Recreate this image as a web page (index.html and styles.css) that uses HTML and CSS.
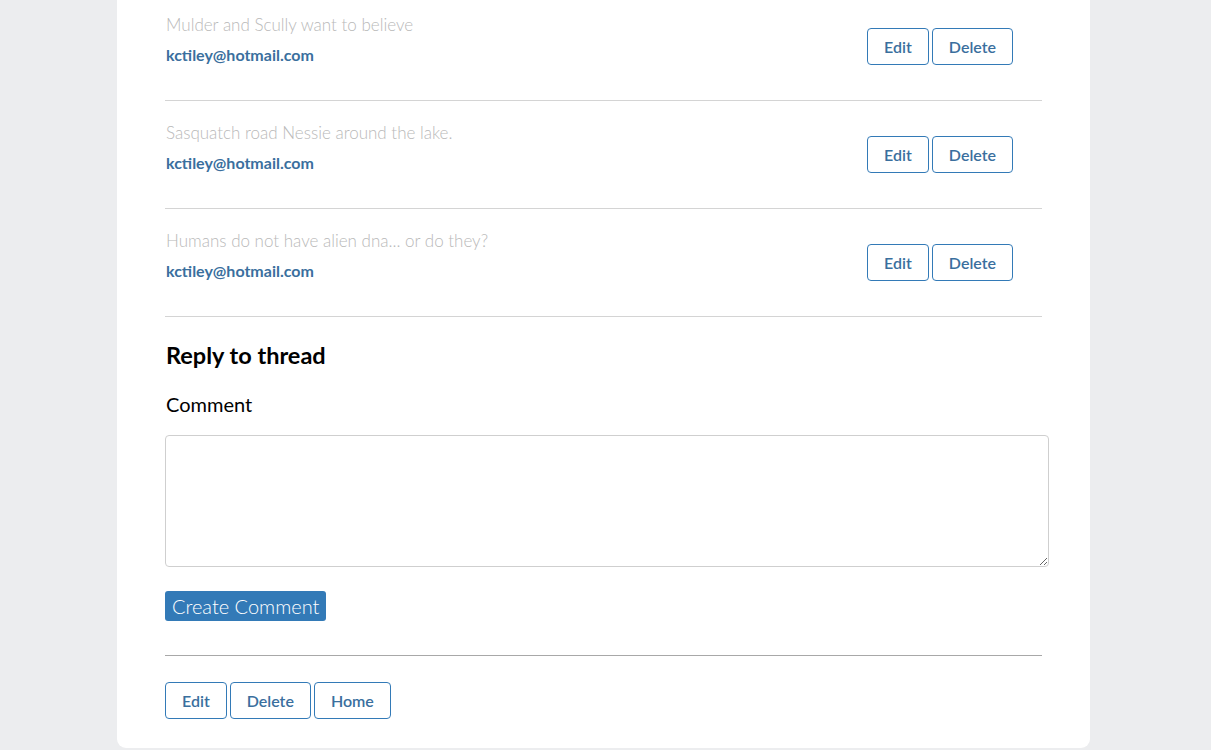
FILE: index.html
```html
<!DOCTYPE html>
<html>
<head>
<meta charset="utf-8">
<link rel="stylesheet" href="styles.css">
</head>
<body>
<main class="card">
  <ul class="comments">
    <li class="comment">
      <div class="comment-body">
        <p class="comment-text">Mulder and Scully want to believe</p>
        <p class="comment-author">kctiley@hotmail.com</p>
      </div>
      <div class="actions">
        <button class="btn">Edit</button>
        <button class="btn">Delete</button>
      </div>
    </li>
    <li class="comment">
      <div class="comment-body">
        <p class="comment-text">Sasquatch road Nessie around the lake.</p>
        <p class="comment-author">kctiley@hotmail.com</p>
      </div>
      <div class="actions">
        <button class="btn">Edit</button>
        <button class="btn">Delete</button>
      </div>
    </li>
    <li class="comment">
      <div class="comment-body">
        <p class="comment-text">Humans do not have alien dna... or do they?</p>
        <p class="comment-author">kctiley@hotmail.com</p>
      </div>
      <div class="actions">
        <button class="btn">Edit</button>
        <button class="btn">Delete</button>
      </div>
    </li>
  </ul>
  <form class="reply">
    <h3 class="reply-title">Reply to thread</h3>
    <label class="reply-label" for="comment">Comment</label>
    <textarea id="comment" class="reply-input"></textarea>
    <button type="button" class="btn-primary">Create Comment</button>
  </form>
  <hr class="divider">
  <div class="footer-actions">
    <button class="btn">Edit</button>
    <button class="btn">Delete</button>
    <button class="btn">Home</button>
  </div>
</main>
</body>
</html>
```

FILE: styles.css
```css
* { box-sizing: border-box; }
html, body {
  margin: 0;
  padding: 0;
  background: #ecedef;
  font-family: Lato, "Open Sans", sans-serif;
}
.card {
  margin-left: 117px;
  width: 973px;
  height: 748px;
  background: #fff;
  border-radius: 0 0 9px 9px;
  padding: 0 48px 30px 48px;
  overflow: hidden;
}
.comments {
  list-style: none;
  margin: 0;
  padding: 0;
}
.comment {
  display: flex;
  align-items: flex-start;
  justify-content: space-between;
  padding: 20px 0 33px 0;
  border-bottom: 1px solid #d4d4d4;
  height: 108px;
}
.comment:first-child {
  padding-top: 13px;
  height: 101px;
}
.comment-body { padding-left: 1px; }
.comment-text {
  margin: 0;
  font-size: 17px;
  font-weight: 300;
  line-height: 24px;
  color: #b9b9b9;
}
.comment-author {
  margin: 6px 0 0 0;
  font-size: 16px;
  font-weight: 700;
  line-height: 24px;
  color: #3a6f9e;
}
.actions {
  display: flex;
  gap: 3px;
  margin-top: 15px;
  margin-right: 29px;
}
.btn {
  height: 37px;
  padding: 0 16px;
  background: #fff;
  border: 1px solid #337ab7;
  border-radius: 4px;
  color: #3a6f9e;
  font-family: Lato, sans-serif;
  font-size: 16px;
  font-weight: 600;
  cursor: pointer;
}
.reply {
  display: flex;
  flex-direction: column;
  align-items: flex-start;
}
.reply-title {
  margin: 25px 0 0 1px;
  font-size: 23.5px;
  line-height: 26px;
  font-weight: 700;
  color: #000;
}
.reply-label {
  margin: 24px 0 0 1px;
  font-size: 20px;
  line-height: 24px;
  color: #000;
}
.reply-input {
  margin-top: 19px;
  width: 884px;
  height: 132px;
  border: 1px solid #cfcfcf;
  border-radius: 4px;
  resize: vertical;
  font-family: Lato, sans-serif;
}
.btn-primary {
  margin-top: 24px;
  height: 30px;
  padding: 0 7px;
  background: #337ab7;
  color: #fff;
  border: none;
  border-radius: 3px;
  font-family: Lato, sans-serif;
  font-size: 20px;
  font-weight: 300;
}
.divider {
  margin: 34px 0 0 0;
  border: none;
  border-top: 1px solid #a8a8a8;
  height: 0;
}
.footer-actions {
  display: flex;
  gap: 3px;
  margin-top: 26px;
}
```
